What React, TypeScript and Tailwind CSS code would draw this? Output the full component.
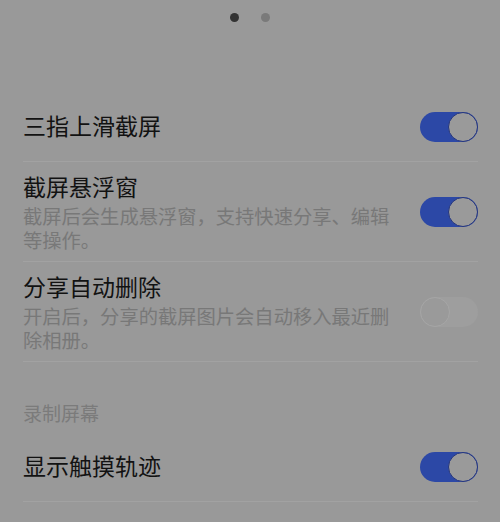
import React from "react";

const font = { fontFamily: '"Noto Sans CJK SC", "Noto Sans", sans-serif' };

function Toggle({ on }: { on: boolean }) {
  if (on) {
    return (
      <div className="relative w-[58px] h-[30px] rounded-full bg-[#2c48a6] shrink-0">
        <div className="absolute right-0 top-0 w-[30px] h-[30px] rounded-full bg-[#9a9a9a] border-[1.5px] border-[#24357e]" />
      </div>
    );
  }
  return (
    <div className="relative w-[58px] h-[30px] rounded-full bg-[#9e9e9e] shrink-0">
      <div className="absolute left-0 top-0 w-[30px] h-[30px] rounded-full bg-[#9a9a9a] border-[1.5px] border-[#a6a6a6]" />
    </div>
  );
}

function Row({ title, sub, on }: { title: string; sub?: string[]; on: boolean }) {
  return (
    <div className="border-b border-[#a2a2a2]">
      <div
        className={
          sub
            ? "flex items-center justify-between h-[99px]"
            : "flex items-center justify-between h-[69px]"
        }
      >
        <div className={sub ? "flex flex-col" : "flex flex-col mb-[4px]"}>
          <div className="text-[23px] leading-[30px] text-[#121212]">{title}</div>
          {sub && (
            <div className="mt-[3px] text-[19.3px] leading-[24px] text-[#787878]">
              {sub.map((s) => (
                <div key={s}>{s}</div>
              ))}
            </div>
          )}
        </div>
        <Toggle on={on} />
      </div>
    </div>
  );
}

export default function App() {
  return (
    <div className="w-[500px] h-[522px] bg-[#999999] overflow-hidden" style={font}>
      <div className="flex justify-center gap-[22px] pt-[13px]">
        <div className="w-[9px] h-[9px] rounded-full bg-[#333333]" />
        <div className="w-[9px] h-[9px] rounded-full bg-[#7a7a7a]" />
      </div>
      <div className="pl-[23px] pr-[22px] pt-[70px]">
        <Row title="三指上滑截屏" on={true} />
        <Row title="截屏悬浮窗" sub={["截屏后会生成悬浮窗，支持快速分享、编辑", "等操作。"]} on={true} />
        <Row title="分享自动删除" sub={["开启后，分享的截屏图片会自动移入最近删", "除相册。"]} on={false} />
        <div className="pt-[39px] pb-[7px] text-[19px] leading-[24px] text-[#7b7b7b]">录制屏幕</div>
        <Row title="显示触摸轨迹" on={true} />
      </div>
    </div>
  );
}
